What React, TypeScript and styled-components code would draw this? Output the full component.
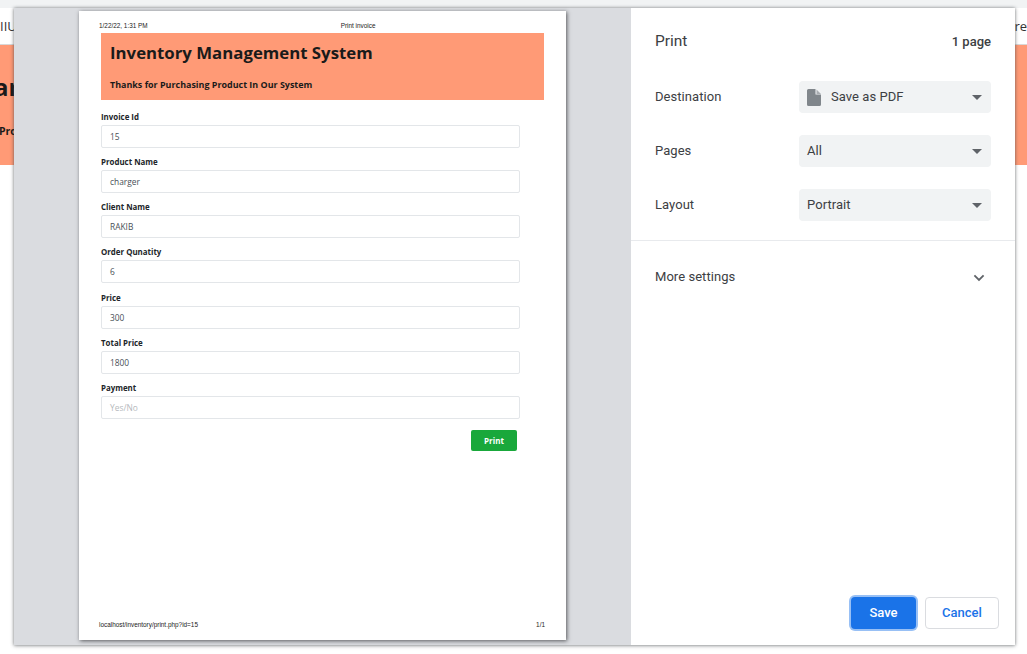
import * as React from 'react';
import styled, { createGlobalStyle } from 'styled-components';

const fields = [
  { label: 'Invoice Id', value: '15' },
  { label: 'Product Name', value: 'charger' },
  { label: 'Client Name', value: 'RAKIB' },
  { label: 'Order Qunatity', value: '6' },
  { label: 'Price', value: '300' },
  { label: 'Total Price', value: '1800' },
  { label: 'Payment', value: '' },
];

const CaretIcon: React.FC = () => (
  <Caret viewBox="0 0 10 5" aria-hidden="true">
    <path d="M0 0h10L5 5z" fill="#5f6368" />
  </Caret>
);

const Select: React.FC<{ children: React.ReactNode }> = ({ children }) => (
  <SelectBox>
    <SelectContent>{children}</SelectContent>
    <CaretIcon />
  </SelectBox>
);

export default function App() {
  return (
    <React.Fragment>
      <GlobalStyle />
      <Page>
        <BrowserStrip>
          <StripText>localhost/inventory/print.php?id=15</StripText>
        </BrowserStrip>
        <NavBar>
          <NavText>IIU</NavText>
          <NavText>re</NavText>
        </NavBar>
        <Hero>
          <HeroTitle>ar</HeroTitle>
          <HeroSub>Pro</HeroSub>
        </Hero>
        <Dialog>
          <Preview>
            <Paper>
              <PrintHeader>
                <span>1/22/22, 1:31 PM</span>
                <PrintTitle>Print invoice</PrintTitle>
              </PrintHeader>
              <Banner>
                <BannerTitle>Inventory Management System</BannerTitle>
                <BannerSub>Thanks for Purchasing Product In Our System</BannerSub>
              </Banner>
              <Form>
                {fields.map((f) => (
                  <Field key={f.label}>
                    <FieldLabel>{f.label}</FieldLabel>
                    <FieldInput $empty={!f.value}>{f.value || 'Yes/No'}</FieldInput>
                  </Field>
                ))}
                <PrintRow>
                  <PrintButton>Print</PrintButton>
                </PrintRow>
              </Form>
              <PrintFooter>
                <span>localhost/inventory/print.php?id=15</span>
                <span>1/1</span>
              </PrintFooter>
            </Paper>
          </Preview>
          <Side>
            <SideHead>
              <SideTitle>Print</SideTitle>
              <PageCount>1 page</PageCount>
            </SideHead>
            <Settings>
              <SettingRow>
                <SettingLabel>Destination</SettingLabel>
                <Select>
                  <FileIcon viewBox="0 0 14 17" aria-hidden="true">
                    <path
                      d="M1.500 0H8.500V5.500H14V15.500A1.500 1.500 0 0 1 12.500 17H1.500A1.500 1.500 0 0 1 0 15.500V1.500A1.500 1.500 0 0 1 1.500 0Z"
                      fill="#80868b"
                    />
                    <path d="M9.500 0.500 14 5H9.500Z" fill="#a9adb1" />
                  </FileIcon>
                  Save as PDF
                </Select>
              </SettingRow>
              <SettingRow>
                <SettingLabel>Pages</SettingLabel>
                <Select>All</Select>
              </SettingRow>
              <SettingRow>
                <SettingLabel>Layout</SettingLabel>
                <Select>Portrait</Select>
              </SettingRow>
            </Settings>
            <MoreRow>
              <SettingLabel>More settings</SettingLabel>
              <Chevron viewBox="0 0 12 8" aria-hidden="true">
                <path d="M1.400 1.400 6 6l4.600-4.600" fill="none" stroke="#5f6368" strokeWidth="1.800" />
              </Chevron>
            </MoreRow>
            <Actions>
              <SaveButton>Save</SaveButton>
              <CancelButton>Cancel</CancelButton>
            </Actions>
          </Side>
        </Dialog>
      </Page>
    </React.Fragment>
  );
}

const GlobalStyle = createGlobalStyle`
  html, body {
    margin: 0;
    padding: 0;
    background: #ffffff;
  }
  * {
    box-sizing: border-box;
  }
`;

const Page = styled.div`
  position: relative;
  width: 1027px;
  height: 654px;
  overflow: hidden;
  background: #ffffff;
  font-family: 'Open Sans', sans-serif;
`;

const BrowserStrip = styled.div`
  height: 8px;
  background: #f1f3f4;
  overflow: hidden;
  padding-left: 15px;
`;

const StripText = styled.div`
  margin-top: -15px;
  font-family: Roboto, sans-serif;
  font-size: 13px;
  line-height: 16px;
  color: #3c4043;
`;

const NavBar = styled.div`
  height: 37px;
  display: flex;
  align-items: center;
  justify-content: space-between;
  padding-bottom: 1px;
  border-bottom: 1px solid #d8d8d8;
  overflow: hidden;
`;

const NavText = styled.span`
  font-size: 13px;
  color: #333333;
`;

const Hero = styled.div`
  height: 120px;
  padding-top: 27px;
  background: #ff9a76;
  color: #1a1a1a;
  font-weight: 700;
`;

const HeroTitle = styled.div`
  margin-left: -6px;
  font-size: 24px;
  line-height: 30px;
`;

const HeroSub = styled.div`
  margin-top: 21px;
  margin-left: -1px;
  font-size: 10.500px;
  line-height: 16px;
`;

const Dialog = styled.div`
  position: absolute;
  left: 14px;
  top: 8px;
  width: 1001px;
  height: 637px;
  display: flex;
  background: #ffffff;
  box-shadow: 0 0 3px rgba(60, 64, 67, 0.55), 0 1px 4px rgba(60, 64, 67, 0.3);
`;

const Preview = styled.div`
  width: 617px;
  flex: none;
  background: #dadce0;
  padding: 3px 0 0 65px;
`;

const Paper = styled.div`
  width: 487px;
  height: 629px;
  display: flex;
  flex-direction: column;
  padding: 0 22px;
  background: #ffffff;
  box-shadow: 1px 1px 4px rgba(32, 33, 36, 0.7);
`;

const PrintHeader = styled.div`
  height: 22px;
  display: flex;
  margin-left: -2px;
  padding-top: 9px;
  font-family: 'Liberation Sans', Arial, sans-serif;
  font-size: 6.400px;
  line-height: 12px;
  color: #222222;
`;

const PrintTitle = styled.span`
  margin-left: 193px;
`;

const Banner = styled.div`
  height: 67px;
  padding: 8px 9px 0;
  background: #ff9a76;
  color: #1a1a1a;
  font-weight: 700;
`;

const BannerTitle = styled.div`
  font-size: 16.800px;
  line-height: 24px;
`;

const BannerSub = styled.div`
  margin-top: 14px;
  font-size: 8.950px;
  line-height: 12px;
`;

const Form = styled.div`
  flex: 1;
  width: 419px;
  padding-top: 10px;
`;

const Field = styled.div`
  height: 45.170px;
`;

const FieldLabel = styled.div`
  height: 15px;
  font-size: 7.900px;
  line-height: 14px;
  font-weight: 700;
  color: #212529;
`;

const FieldInput = styled.div<{ $empty: boolean }>`
  height: 23px;
  padding-left: 8px;
  border: 1px solid #e3e6e9;
  border-radius: 2px;
  font-size: 8.400px;
  line-height: 22px;
  color: ${(p) => (p.$empty ? '#b5b9bd' : '#495057')};
`;

const PrintRow = styled.div`
  display: flex;
  justify-content: flex-end;
  padding: 4px 3px 0 0;
`;

const PrintButton = styled.div`
  width: 46px;
  height: 21px;
  background: #19a83b;
  border-radius: 2px;
  color: #ffffff;
  font-size: 8px;
  font-weight: 700;
  line-height: 21px;
  text-align: center;
`;

const PrintFooter = styled.div`
  height: 20px;
  margin: 0 -1px 0 -2px;
  display: flex;
  justify-content: space-between;
  font-family: 'Liberation Sans', Arial, sans-serif;
  font-size: 6.400px;
  line-height: 10px;
  color: #222222;
`;

const Side = styled.div`
  flex: 1;
  display: flex;
  flex-direction: column;
  font-family: Roboto, sans-serif;
  color: #202124;
`;

const SideHead = styled.div`
  height: 65px;
  display: flex;
  justify-content: space-between;
  align-items: center;
  padding: 1px 24px 0;
`;

const SideTitle = styled.div`
  font-size: 15.500px;
  color: #3c4043;
`;

const PageCount = styled.div`
  font-size: 13px;
  font-weight: 500;
  color: #3c4043;
`;

const Settings = styled.div`
  display: flex;
  flex-direction: column;
  gap: 22px;
  padding: 8px 24px 19px;
  border-bottom: 1px solid #e8eaed;
`;

const SettingRow = styled.div`
  height: 32px;
  display: flex;
  justify-content: space-between;
  align-items: center;
`;

const SettingLabel = styled.div`
  margin-top: -2px;
  font-size: 13px;
  line-height: 15px;
  letter-spacing: 0.050px;
  color: #3c4043;
`;

const SelectBox = styled.div`
  width: 192px;
  height: 32px;
  display: flex;
  align-items: center;
  justify-content: space-between;
  padding: 0 8px;
  border-radius: 4px;
  background: #f1f3f4;
`;

const SelectContent = styled.div`
  display: flex;
  align-items: center;
  height: 17px;
  padding-bottom: 1px;
  font-size: 13px;
  line-height: 15px;
  letter-spacing: 0.050px;
  color: #3c4043;
`;

const Caret = styled.svg`
  width: 10px;
  height: 5px;
  margin-right: 1px;
`;

const FileIcon = styled.svg`
  width: 14px;
  height: 17px;
  margin: 1px 10px 0 0;
  flex: none;
`;

const MoreRow = styled.div`
  height: 73px;
  display: flex;
  justify-content: space-between;
  align-items: center;
  padding: 0 30px 0 24px;
`;

const Chevron = styled.svg`
  width: 12px;
  height: 8px;
`;

const Actions = styled.div`
  margin-top: auto;
  display: flex;
  justify-content: flex-end;
  gap: 9px;
  padding: 0 16px 16px;
`;

const SaveButton = styled.div`
  width: 65px;
  height: 32px;
  border-radius: 4px;
  background: #1a73e8;
  box-shadow: 0 0 0 2px rgba(26, 115, 232, 0.45);
  color: #ffffff;
  font-size: 13px;
  font-weight: 500;
  line-height: 32px;
  text-align: center;
`;

const CancelButton = styled.div`
  width: 74px;
  height: 32px;
  border: 1px solid #dadce0;
  border-radius: 4px;
  background: #ffffff;
  color: #1a73e8;
  font-size: 13px;
  font-weight: 500;
  line-height: 30px;
  text-align: center;
`;
